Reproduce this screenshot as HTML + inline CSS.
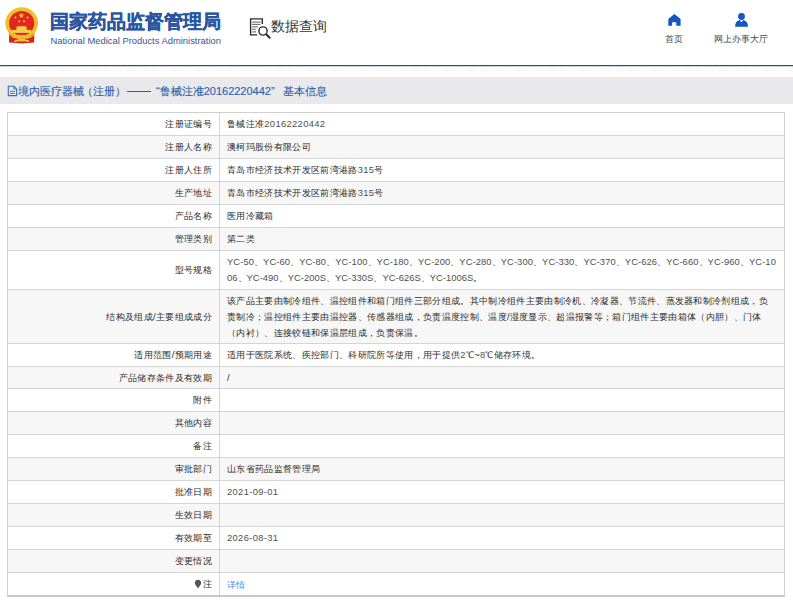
<!DOCTYPE html>
<html><head><meta charset="utf-8">
<style>
*{margin:0;padding:0;box-sizing:border-box}
html,body{width:793px;height:602px;overflow:hidden;background:#fff;font-family:"Liberation Sans",sans-serif;color:#333}
.a{position:absolute;white-space:nowrap}
#title{left:50px;top:9.8px;font-size:19px;font-weight:bold;-webkit-text-stroke:0.3px #2a55a2;color:#2a55a2;line-height:24px;letter-spacing:0px}
#eng{left:50.5px;top:34.8px;font-size:9.4px;color:#31569b;line-height:11px}
#sq{left:271px;top:16px;font-size:14px;color:#333;line-height:20px}
.nav{font-size:9px;letter-spacing:0.1px;color:#4a4a4a;line-height:11px}
#bl{left:0;top:65px;width:793px;height:2px;background:linear-gradient(#234c82 0 50%,#c9d5e3 50% 100%)}
#hatch{left:0;top:67px;width:793px;height:5px;background:repeating-linear-gradient(135deg,#fff 0 1.6px,#f6f6f6 1.6px 2.6px)}
#band{left:0;top:77px;width:793px;height:27px;background:#e9e9eb}
.bt{top:83px;font-size:11px;color:#2b5fad;-webkit-text-stroke:0.12px #2b5fad;line-height:16px}
#tbl{left:7px;top:112px;width:778px;height:485px;border:1px solid #cfcfcf;border-bottom:2px solid #c8c8c8}
.g{background:#f7f7f7}
.hl{left:8px;width:776px;height:1px;background:#d4d4d4}
.lab{position:absolute;right:581px;font-size:9.4px;letter-spacing:0.33px;color:#2b2b2b;line-height:16px;white-space:nowrap}
.l{font-style:normal;color:#505050}
.val{position:absolute;left:227px;font-size:9.4px;letter-spacing:0.33px;color:#2b2b2b;line-height:16px;white-space:nowrap}
#vline{left:219px;top:112px;width:1px;height:483px;background:#d4d4d4}
</style></head><body>
<!-- emblem -->
<svg class="a" style="left:0;top:0" width="45" height="50" viewBox="0 0 45 50">
  <path d="M9 32 L34.2 32 L34.2 42.6 Q21.7 44.2 9 42.6 Z" fill="#d8261d"/>
  <ellipse cx="21.7" cy="23" rx="16.4" ry="15.7" fill="#efbf2e"/>
  <ellipse cx="21.7" cy="23.3" rx="12.6" ry="12.3" fill="#e0291e"/>
  <g fill="#f5cf45">
    <polygon points="21.4,12.6 22.1,14.6 24.3,14.6 22.6,15.9 23.2,18 21.4,16.7 19.6,18 20.2,15.9 18.5,14.6 20.7,14.6"/>
    <circle cx="15.5" cy="17.5" r="1"/><circle cx="27.6" cy="17.5" r="1"/>
    <circle cx="19.2" cy="21.2" r="0.95"/><circle cx="24" cy="21.2" r="0.95"/>
    <path d="M17.5 26.3 H25.6 L26.7 27.6 V29.9 H16.3 V27.6 Z"/>
    <rect x="11.7" y="29.9" width="19.6" height="3"/>
  </g>
  <path d="M8.5 31 Q11 37 15 36.5 Q18.5 34 21.7 35.2 Q25 34 28.4 36.5 Q32.4 37 35 31 L34.6 34.5 Q31 39.5 21.7 38.6 Q12.4 39.5 8.9 34.5 Z" fill="#efbf2e"/>
  <path d="M14 41.5 Q14.5 39.5 17 39.8 Q19 38.5 21.7 38.8 Q24.4 38.5 26.4 39.8 Q29 39.5 29.4 41.5 L28 42.2 Q26 40.8 21.7 41.6 Q17.4 40.8 15.4 42.2 Z" fill="#f2c53a"/>
</svg>
<div class="a" id="title">国家药品监督管理局</div>
<div class="a" id="eng">National Medical Products Administration</div>
<!-- doc search icon -->
<svg class="a" style="left:245px;top:14px" width="30" height="28" viewBox="0 0 30 28">
  <g fill="none" stroke="#2b2b2b" stroke-width="1.4">
    <path d="M12.2 20.9 H5.6 V4.9 H17.3 V10"/>
  </g>
  <g stroke="#6a6a6a" stroke-width="1.1">
    <line x1="7.2" y1="8.1" x2="15.6" y2="8.1"/>
    <line x1="7.2" y1="10.4" x2="15.6" y2="10.4"/>
    <line x1="7.2" y1="12.9" x2="12.8" y2="12.9"/>
    <line x1="7.2" y1="15.3" x2="10.8" y2="15.3"/>
    <line x1="7.2" y1="17.9" x2="11" y2="17.9"/>
  </g>
  <circle cx="18" cy="17" r="4.1" fill="#fff" stroke="#2b2b2b" stroke-width="1.4"/>
  <line x1="21" y1="20" x2="25.2" y2="24.2" stroke="#2b2b2b" stroke-width="2"/>
</svg>
<div class="a" id="sq">数据查询</div>
<!-- nav icons -->
<svg class="a" style="left:660px;top:8px" width="30" height="22" viewBox="0 0 30 22">
  <path d="M14.4 6 L20.6 11 V17.8 H16.3 V14.2 H12.1 V17.8 H8.3 V11 Z" fill="#1556c0"/>
</svg>
<div class="a nav" style="left:665px;top:33.5px">首页</div>
<svg class="a" style="left:726px;top:8px" width="30" height="22" viewBox="0 0 30 22">
  <circle cx="15.5" cy="8.5" r="3.4" fill="#1556c0"/>
  <path d="M9.1 18.75 Q9.2 13 14 12.1 L15.5 14.5 L17 12.1 Q21.9 13 22 18.75 Z" fill="#1556c0"/>
</svg>
<div class="a nav" style="left:714px;top:33.5px">网上办事大厅</div>

<div class="a" id="bl"></div>
<div class="a" id="hatch"></div>
<div class="a" id="band"></div>
<svg class="a" style="left:7px;top:85px" width="11" height="12" viewBox="0 0 11 12">
  <path d="M1.3 1.3 H7 L9.6 3.9 V10.6 H1.3 Z" fill="none" stroke="#3a6cb8" stroke-width="1.1"/>
  <path d="M6.8 1.3 V4 H9.6" fill="none" stroke="#3a6cb8" stroke-width="0.9"/>
  <line x1="3" y1="6.3" x2="8" y2="6.3" stroke="#3a6cb8" stroke-width="0.9"/>
  <line x1="3" y1="8.4" x2="8" y2="8.4" stroke="#3a6cb8" stroke-width="0.9"/>
</svg>
<div class="a bt" style="left:18px">境内医疗器械</div>
<div class="a bt" style="left:82px">（注册）</div>
<div class="a" style="left:127px;top:90.5px;width:24px;height:1.3px;background:#2b5fad"></div>
<div class="a bt" style="left:156px">“鲁械注准20162220442”</div>
<div class="a bt" style="left:283px">基本信息</div>

<div class="a" id="tbl"></div>
<!--ROWS-->
<div class="a" style="left:8px;top:113px;width:776px;height:22px"></div>
<div class="a lab" style="top:116.0px">注册证编号</div>
<div class="a val" style="top:116.0px">鲁械注准<i class="l">20162220442</i></div>
<div class="a g" style="left:8px;top:136px;width:776px;height:22px"></div>
<div class="a hl" style="top:135px"></div>
<div class="a lab" style="top:139.0px">注册人名称</div>
<div class="a val" style="top:139.0px">澳柯玛股份有限公司</div>
<div class="a" style="left:8px;top:159px;width:776px;height:22px"></div>
<div class="a hl" style="top:158px"></div>
<div class="a lab" style="top:162.0px">注册人住所</div>
<div class="a val" style="top:162.0px">青岛市经济技术开发区前湾港路<i class="l">315</i>号</div>
<div class="a g" style="left:8px;top:182px;width:776px;height:22px"></div>
<div class="a hl" style="top:181px"></div>
<div class="a lab" style="top:185.0px">生产地址</div>
<div class="a val" style="top:185.0px">青岛市经济技术开发区前湾港路<i class="l">315</i>号</div>
<div class="a" style="left:8px;top:205px;width:776px;height:22px"></div>
<div class="a hl" style="top:204px"></div>
<div class="a lab" style="top:208.0px">产品名称</div>
<div class="a val" style="top:208.0px">医用冷藏箱</div>
<div class="a g" style="left:8px;top:228px;width:776px;height:22px"></div>
<div class="a hl" style="top:227px"></div>
<div class="a lab" style="top:231.0px">管理类别</div>
<div class="a val" style="top:231.0px">第二类</div>
<div class="a" style="left:8px;top:251px;width:776px;height:38px"></div>
<div class="a hl" style="top:250px"></div>
<div class="a lab" style="top:262.0px">型号规格</div>
<div class="a val" style="top:254.0px"><span style="letter-spacing:0.08px"><i class="l">YC-50</i>、<i class="l">YC-60</i>、<i class="l">YC-80</i>、<i class="l">YC-100</i>、<i class="l">YC-180</i>、<i class="l">YC-200</i>、<i class="l">YC-280</i>、<i class="l">YC-300</i>、<i class="l">YC-330</i>、<i class="l">YC-370</i>、<i class="l">YC-626</i>、<i class="l">YC-660</i>、<i class="l">YC-960</i>、<i class="l">YC-10</i></span><br><span style="letter-spacing:0.04px"><i class="l">06</i>、<i class="l">YC-490</i>、<i class="l">YC-200S</i>、<i class="l">YC-330S</i>、<i class="l">YC-626S</i>、<i class="l">YC-1006S</i>。</span></div>
<div class="a g" style="left:8px;top:290px;width:776px;height:53px"></div>
<div class="a hl" style="top:289px"></div>
<div class="a lab" style="top:308.5px">结构及组成/主要组成成分</div>
<div class="a val" style="top:292.5px">该产品主要由制冷组件、温控组件和箱门组件三部分组成。其中制冷组件主要由制冷机、冷凝器、节流件、蒸发器和制冷剂组成，负<br>责制冷；温控组件主要由温控器、传感器组成，负责温度控制、温度/湿度显示、超温报警等；箱门组件主要由箱体（内胆）、门体<br>（内衬）、连接铰链和保温层组成，负责保温。</div>
<div class="a" style="left:8px;top:344px;width:776px;height:22px"></div>
<div class="a hl" style="top:343px"></div>
<div class="a lab" style="top:347.0px">适用范围/预期用途</div>
<div class="a val" style="top:347.0px">适用于医院系统、疾控部门、科研院所等使用，用于提供<i class="l">2</i>℃~<i class="l">8</i>℃储存环境。</div>
<div class="a g" style="left:8px;top:367px;width:776px;height:21px"></div>
<div class="a hl" style="top:366px"></div>
<div class="a lab" style="top:369.5px">产品储存条件及有效期</div>
<div class="a val" style="top:369.5px">/</div>
<div class="a" style="left:8px;top:389px;width:776px;height:22px"></div>
<div class="a hl" style="top:388px"></div>
<div class="a lab" style="top:392.0px">附件</div>
<div class="a g" style="left:8px;top:412px;width:776px;height:22px"></div>
<div class="a hl" style="top:411px"></div>
<div class="a lab" style="top:415.0px">其他内容</div>
<div class="a" style="left:8px;top:435px;width:776px;height:22px"></div>
<div class="a hl" style="top:434px"></div>
<div class="a lab" style="top:438.0px">备注</div>
<div class="a g" style="left:8px;top:458px;width:776px;height:22px"></div>
<div class="a hl" style="top:457px"></div>
<div class="a lab" style="top:461.0px">审批部门</div>
<div class="a val" style="top:461.0px">山东省药品监督管理局</div>
<div class="a" style="left:8px;top:481px;width:776px;height:22px"></div>
<div class="a hl" style="top:480px"></div>
<div class="a lab" style="top:484.0px">批准日期</div>
<div class="a val" style="top:484.0px"><i class="l">2021-09-01</i></div>
<div class="a g" style="left:8px;top:504px;width:776px;height:22px"></div>
<div class="a hl" style="top:503px"></div>
<div class="a lab" style="top:507.0px">生效日期</div>
<div class="a" style="left:8px;top:527px;width:776px;height:22px"></div>
<div class="a hl" style="top:526px"></div>
<div class="a lab" style="top:530.0px">有效期至</div>
<div class="a val" style="top:530.0px"><i class="l">2026-08-31</i></div>
<div class="a g" style="left:8px;top:550px;width:776px;height:22px"></div>
<div class="a hl" style="top:549px"></div>
<div class="a lab" style="top:553.0px">变更情况</div>
<div class="a" style="left:8px;top:573px;width:776px;height:22px"></div>
<div class="a hl" style="top:572px"></div>
<div class="a lab" style="top:576.0px"><svg width="8" height="10" viewBox="0 0 8 10" style="vertical-align:-1.8px;margin-right:1px"><path d="M4 0.8 C6 0.8 7.2 2.2 7.2 4 C7.2 5.8 5 7.5 4 9.5 C3 7.5 0.8 5.8 0.8 4 C0.8 2.2 2 0.8 4 0.8Z" fill="#555"/></svg>注</div>
<div class="a val" style="top:576.0px"><span style="color:#3f8ee8;position:relative;top:0.7px">详情</span></div>
<div class="a" id="vline"></div>
<!--/ROWS-->
</body></html>
